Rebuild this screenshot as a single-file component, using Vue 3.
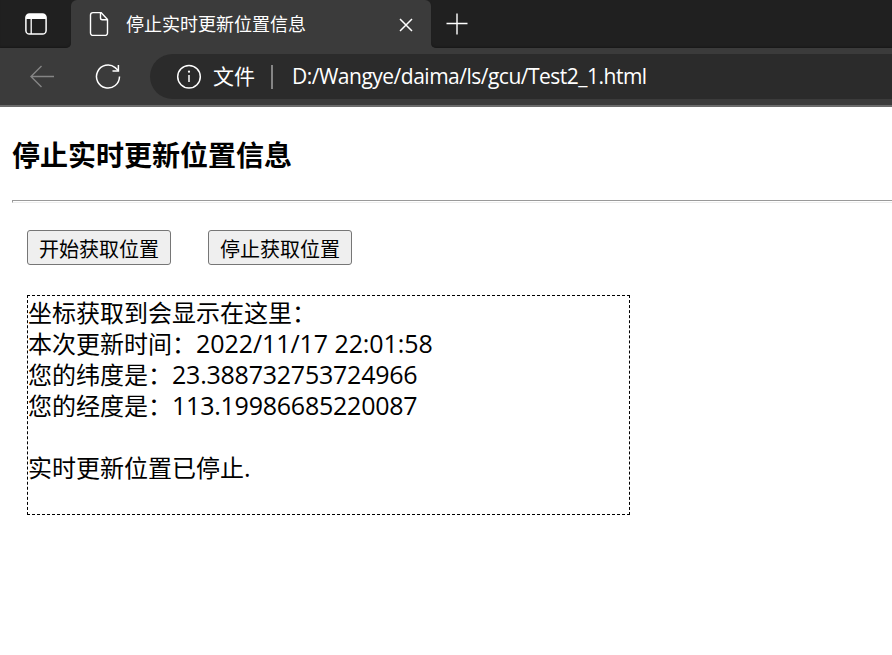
<script setup>
const title = '停止实时更新位置信息'
const url = 'D:/Wangye/daima/ls/gcu/Test2_1.html'
const buttons = ['开始获取位置', '停止获取位置']
const lines = [
  { label: '坐标获取到会显示在这里：', value: '' },
  { label: '本次更新时间：', value: '2022/11/17 22:01:58', kind: 'time' },
  { label: '您的纬度是：', value: '23.388732753724966' },
  { label: '您的经度是：', value: '113.19986685220087' },
  { label: '', value: '' },
  { label: '实时更新位置已停止', value: '.' },
]
</script>

<template>
  <div class="window">
    <header class="tabstrip">
      <div class="left">
        <svg class="panel-icon" width="24" height="24" viewBox="0 0 24 24" fill="none">
          <rect x="1.9" y="2" width="20.2" height="20" rx="3.6" stroke="#fff" stroke-width="1.5" />
          <path d="M2 7V5.500A3.500 3.500 0 0 1 5.500 2H18.500A3.500 3.500 0 0 1 22 5.500V7Z" fill="#fff" />
          <path d="M7.200 7V22" stroke="#fff" stroke-width="1.300" />
        </svg>
      </div>
      <div class="tab">
        <svg class="file-icon" width="20" height="26" viewBox="0 0 20 26" fill="none" stroke="#fff" stroke-width="1.400" stroke-linejoin="round">
          <path d="M12 1.600H4A2.500 2.500 0 0 0 1.500 4.100V21.900A2.500 2.500 0 0 0 4 24.400H16A2.500 2.500 0 0 0 18.500 21.900V8.500Z" />
          <path d="M11.500 1.600V7A1.800 1.800 0 0 0 13.300 8.800H18.500" />
        </svg>
        <span class="tab-title">{{ title }}</span>
        <svg class="close" width="14" height="14" viewBox="0 0 14 14" stroke="#fff" stroke-width="1.500">
          <path d="M1 1L13 13M13 1L1 13" />
        </svg>
      </div>
      <div class="right">
        <svg width="22" height="22" viewBox="0 0 22 22" stroke="#fff" stroke-width="1.400">
          <path d="M.5 10.500H21.500M11 .5V21.500" />
        </svg>
      </div>
    </header>

    <nav class="toolbar">
      <svg class="back" width="26" height="24" viewBox="0 0 26 24" fill="none" stroke="#858585" stroke-width="1.400">
        <path d="M12.500 1L2 11.500L12.500 22M2 11.500H25" />
      </svg>
      <svg class="reload" width="26" height="26" viewBox="0 0 26 26" fill="none" stroke="#fff" stroke-width="1.500">
        <path d="M24.500 12.500A11.500 11.500 0 1 1 20.200 3.600L23.300 6.500" />
        <path d="M23.400 1V7H17.500" />
      </svg>
      <div class="address">
        <svg class="info" width="26" height="26" viewBox="0 0 26 26" fill="none" stroke="#fff" stroke-width="1.500">
          <circle cx="13" cy="12.700" r="11.300" />
          <path d="M13 11V18" />
          <circle cx="13" cy="7.700" r="1.100" fill="#fff" stroke="none" />
        </svg>
        <span class="scheme">文件</span>
        <span class="divider"></span>
        <span class="url">{{ url }}</span>
      </div>
    </nav>

    <main class="page">
      <h3>{{ title }}</h3>
      <div class="rule"></div>
      <div class="actions">
        <button v-for="b in buttons" :key="b" type="button">{{ b }}</button>
      </div>
      <section class="output">
        <div v-for="(l, i) in lines" :key="i" class="line">
          <span>{{ l.label }}</span><span class="value" :class="l.kind">{{ l.value }}</span>
        </div>
      </section>
    </main>
  </div>
</template>

<style>
body {
  margin: 0;
  background: #fff;
}
</style>

<style scoped>
.window {
  width: 892px;
  height: 655px;
  overflow: hidden;
  background: #fff;
  color: #000;
  font-family: "Noto Sans CJK SC", sans-serif;
}
.tabstrip {
  display: flex;
  height: 48px;
  background: #3b3b3b;
}
.left,
.right {
  background: #202020;
  box-shadow: inset 0 -2px 2px -1px #181818;
}
.left {
  box-sizing: border-box;
  width: 71px;
  padding: 12px 0 0 24px;
  border-radius: 0 0 5px 0;
}
.right {
  box-sizing: border-box;
  flex: 1;
  padding: 13px 0 0 15px;
  border-radius: 0 0 0 5px;
}
.left svg,
.right svg {
  display: block;
}
.tab {
  box-sizing: border-box;
  display: flex;
  align-items: center;
  width: 360px;
  height: 48px;
  padding: 0 18px;
  background: #3b3b3b;
  border-radius: 6px 6px 0 0;
  color: #fff;
}
.tab-title {
  margin: -3px 0 0 17px;
  font-size: 18px;
  line-height: 26px;
  white-space: nowrap;
}
.close {
  margin: 1px 0 0 auto;
}
.toolbar {
  box-sizing: border-box;
  display: flex;
  align-items: center;
  height: 59px;
  padding-left: 29px;
  background: #3b3b3b;
  border-bottom: 2px solid #6b6b6b;
}
.tabstrip {
  background: linear-gradient(#202020 0 24px, #3b3b3b 24px);
}
.reload {
  margin-left: 40px;
}
.address {
  display: flex;
  align-items: center;
  flex: 1;
  height: 45px;
  margin-left: 29px;
  padding-left: 26px;
  background: #2b2b2b;
  border-radius: 23px 0 0 23px;
  color: #fff;
}
.scheme {
  margin: -3px 0 0 11px;
  font-size: 21px;
  line-height: 30px;
}
.divider {
  width: 2px;
  height: 24px;
  margin-left: 16px;
  background: #858585;
}
.url {
  margin: -1px 0 0 19px;
  font: 21px/30px "Open Sans", "Noto Sans", sans-serif;
  letter-spacing: -0.5px;
  white-space: nowrap;
}
.page {
  padding-left: 12px;
}
h3 {
  margin: 0;
  padding-top: 27px;
  font-size: 28px;
  line-height: 40px;
  font-weight: 700;
}
.rule {
  height: 1px;
  margin-top: 26px;
  border-top: 1px solid #9a9a9a;
  border-bottom: 1px solid #eee;
  border-left: 1px solid #9a9a9a;
}
.actions {
  display: flex;
  gap: 37px;
  margin: 27px 0 30px 15px;
}
button {
  box-sizing: border-box;
  width: 144px;
  height: 35px;
  padding: 2px 0 0;
  border: 1px solid #767676;
  border-radius: 3px;
  background: #efefef;
  color: #000;
  font-family: inherit;
  font-size: 20px;
  line-height: 30px;
  text-align: center;
}
.output {
  box-sizing: border-box;
  width: 603px;
  height: 220px;
  margin-left: 15px;
  border: 1px dashed #000;
  font-size: 24px;
}
.line {
  height: 31px;
  line-height: 31px;
  white-space: nowrap;
}
.value {
  font-family: "Open Sans", "Noto Sans", sans-serif;
  font-size: 25px;
  letter-spacing: -0.23px;
}
.time {
  letter-spacing: -0.07px;
}
</style>
